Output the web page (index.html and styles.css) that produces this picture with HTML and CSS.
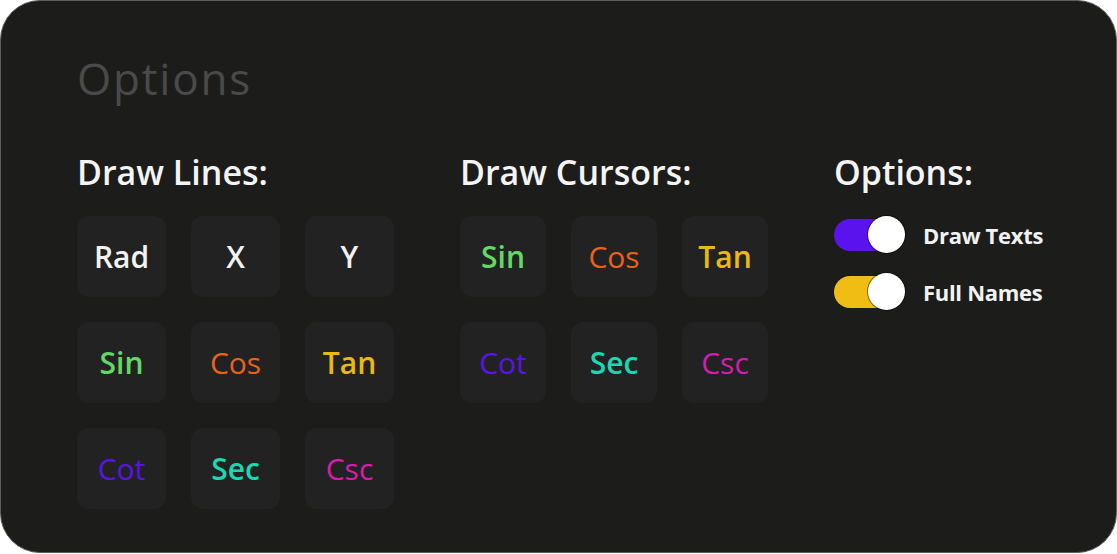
FILE: index.html
```html
<!DOCTYPE html>
<html>
<head>
<meta charset="utf-8">
<link rel="stylesheet" href="styles.css">
</head>
<body>
<div class="card">
  <h1 class="title">Options</h1>
  <div class="columns">
    <section class="group">
      <h2 class="heading">Draw Lines:</h2>
      <div class="grid grid-lines">
        <div class="btn c-white">Rad</div>
        <div class="btn c-white">X</div>
        <div class="btn c-white">Y</div>
        <div class="btn c-sin">Sin</div>
        <div class="btn c-cos">Cos</div>
        <div class="btn c-tan">Tan</div>
        <div class="btn c-cot">Cot</div>
        <div class="btn c-sec">Sec</div>
        <div class="btn c-csc">Csc</div>
      </div>
    </section>
    <section class="group">
      <h2 class="heading">Draw Cursors:</h2>
      <div class="grid grid-cursors">
        <div class="btn c-sin">Sin</div>
        <div class="btn c-cos">Cos</div>
        <div class="btn c-tan">Tan</div>
        <div class="btn c-cot">Cot</div>
        <div class="btn c-sec">Sec</div>
        <div class="btn c-csc">Csc</div>
      </div>
    </section>
    <section class="group">
      <h2 class="heading">Options:</h2>
      <div class="toggles">
        <div class="toggle-row">
          <div class="toggle"><span class="track track-purple"></span><span class="knob"></span></div>
          <span class="toggle-label">Draw Texts</span>
        </div>
        <div class="toggle-row">
          <div class="toggle"><span class="track track-yellow"></span><span class="knob"></span></div>
          <span class="toggle-label">Full Names</span>
        </div>
      </div>
    </section>
  </div>
</div>
</body>
</html>
```

FILE: styles.css
```css
* { box-sizing: border-box; }
html, body { margin: 0; padding: 0; background: #ffffff; }
body { font-family: "Open Sans", "Noto Sans", sans-serif; }

.card {
  width: 1117px;
  height: 553px;
  background: #1c1d1b;
  border: 1px solid #5e5e5e;
  border-radius: 40px;
  padding: 53px 0 0 76px;
  display: flex;
  flex-direction: column;
}

.title {
  margin: 0;
  font-size: 44px;
  line-height: 48px;
  font-weight: 400;
  letter-spacing: 1.8px;
  color: #4a4a4a;
}

.columns {
  display: flex;
  gap: 66px;
  margin-top: 52px;
}

.group { display: flex; flex-direction: column; }

.heading {
  margin: 0;
  font-size: 34px;
  line-height: 36px;
  font-weight: 600;
  color: #f4f4f4;
}

.grid {
  display: grid;
  grid-auto-rows: 81px;
  gap: 25px;
  margin-top: 26px;
}
.grid-lines { grid-template-columns: repeat(3, 89px); }
.grid-cursors { grid-template-columns: repeat(3, 86px); }

.btn {
  background: #222222;
  border-radius: 12px;
  display: flex;
  align-items: center;
  justify-content: center;
  font-size: 30px;
  font-weight: 500;
}
.c-white { color: #f2f2f2; font-weight: 600; }
.c-sin { color: #62d964; font-weight: 600; }
.c-cos { color: #e8621a; }
.c-tan { color: #ecb812; font-weight: 600; }
.c-cot { color: #5a14e6; }
.c-sec { color: #1ad8b2; font-weight: 600; }
.c-csc { color: #d81cb0; }

.toggles {
  display: flex;
  flex-direction: column;
  gap: 20px;
  margin-top: 26px;
}
.toggle-row {
  display: flex;
  align-items: center;
  gap: 18px;
}
.toggle {
  display: flex;
  align-items: center;
  width: 71px;
  height: 37px;
}
.track {
  width: 62px;
  height: 32px;
  border-radius: 16px;
  flex: none;
}
.track-purple { background: #5b13ee; }
.track-yellow { background: #efbd14; }
.knob {
  width: 37px;
  height: 37px;
  border-radius: 50%;
  background: #ffffff;
  box-shadow: 0 0 0 1px rgba(0, 0, 0, 0.45);
  margin-left: -28px;
  flex: none;
}
.toggle-label {
  font-size: 22px;
  font-weight: 700;
  color: #f2f2f2;
  letter-spacing: -0.3px;
}
```
